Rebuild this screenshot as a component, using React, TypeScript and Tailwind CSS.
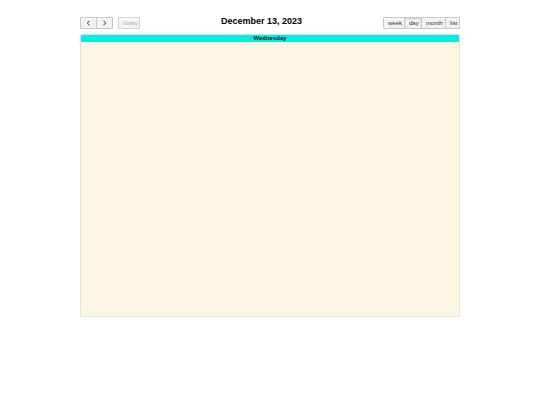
export default function App() {
  const btn =
    'h-[12px] border border-[#c8c8c8] bg-[#f2f2f2] px-[4px] text-[6px] leading-none text-[#333] shadow-[inset_0_1px_0_rgba(255,255,255,0.5)]'
  return (
    <div className="w-[540px] h-[405px] bg-white" style={{ fontFamily: '"Liberation Sans", Arial, sans-serif' }}>
      <div className="ml-[80px] w-[380px] pt-[15px]">
        <div className="flex items-start justify-between h-[14px]">
          <div className="flex items-center mt-[2px]">
            <div className="flex">
              <button className={`${btn} w-[17px] rounded-l-[1px] flex items-center justify-center`}>
                <svg width="5" height="6" viewBox="0 0 5 6"><path d="M3.5 0.8 L1.3 3 L3.5 5.2" fill="none" stroke="#333" strokeWidth="1" /></svg>
              </button>
              <button className={`${btn} w-[17px] -ml-px rounded-r-[1px] flex items-center justify-center`}>
                <svg width="5" height="6" viewBox="0 0 5 6"><path d="M1.5 0.8 L3.7 3 L1.5 5.2" fill="none" stroke="#333" strokeWidth="1" /></svg>
              </button>
            </div>
            <button className={`${btn} ml-[5px] w-[22px] rounded-[1px] px-0 text-[#999] opacity-80`}>today</button>
          </div>
          <div className="text-[9px] font-bold leading-[12px] text-black">December 13, 2023</div>
          <div className="flex mt-[2px]">
            <button className={`${btn} w-[22px] rounded-l-[1px] px-0`}>week</button>
            <button className={`${btn} w-[18px] -ml-px px-0 bg-[#d8d8d8] shadow-[inset_0_1px_2px_rgba(0,0,0,0.15)]`}>day</button>
            <button className={`${btn} w-[25px] -ml-px px-0`}>month</button>
            <button className={`${btn} w-[15px] -ml-px rounded-r-[1px] px-0`}>list</button>
          </div>
        </div>
        <div className="mt-[5px] border border-[#e2e2e2]">
          <div className="h-[7px] bg-[#00f0e0] text-center text-[6px] font-bold leading-[7px] text-[#111]">Wednesday</div>
          <div className="h-[274px] bg-[#fdf6e3]" />
        </div>
      </div>
    </div>
  )
}
